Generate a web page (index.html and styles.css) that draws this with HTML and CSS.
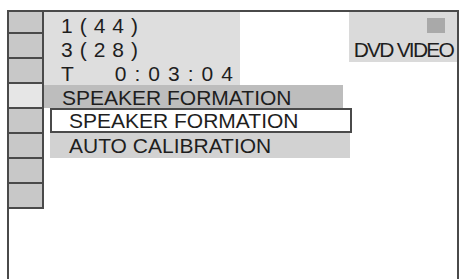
FILE: index.html
```html
<!DOCTYPE html>
<html>
<head>
<meta charset="utf-8">
<link rel="stylesheet" href="styles.css">
</head>
<body>
<div class="screen">
  <div class="tiles">
    <div class="tile first"></div>
    <div class="tile"></div>
    <div class="tile"></div>
    <div class="tile light"></div>
    <div class="tile"></div>
    <div class="tile"></div>
    <div class="tile"></div>
    <div class="tile"></div>
  </div>
  <div class="main">
    <div class="top">
      <div class="info">
        <div class="line">1(44)</div>
        <div class="line">3(28)</div>
        <div class="line time"><span class="time-label">T</span><span class="time-value">0:03:04</span></div>
      </div>
      <div class="disc">
        <span class="disc-icon"></span>
        <span class="disc-label">DVD VIDEO</span>
      </div>
    </div>
    <div class="menu-title">SPEAKER FORMATION</div>
    <div class="menu-item selected">SPEAKER FORMATION</div>
    <div class="menu-item">AUTO CALIBRATION</div>
  </div>
</div>
</body>
</html>
```

FILE: styles.css
```css
html, body {
  margin: 0;
  padding: 0;
  background: #ffffff;
}
body {
  font-family: "Liberation Sans", Arial, sans-serif;
  font-size: 21px;
  color: #1e1e1e;
}
.screen {
  box-sizing: border-box;
  margin: 10px 0 0 7px;
  width: 452px;
  height: 269px;
  border: 2px solid #4a4a4a;
  border-bottom: none;
  display: flex;
  align-items: flex-start;
}
.tiles {
  box-sizing: border-box;
  width: 35px;
  border-right: 2px solid #4a4a4a;
  display: flex;
  flex-direction: column;
}
.tile {
  height: 23px;
  background: #c8c8c8;
  border-bottom: 2px solid #4a4a4a;
}
.tile.first {
  height: 20px;
}
.tile.light {
  background: #e6e6e6;
}
.main {
  flex: 1;
  display: flex;
  flex-direction: column;
  align-items: flex-start;
}
.top {
  align-self: stretch;
  display: flex;
  justify-content: space-between;
  align-items: flex-start;
}
.info {
  box-sizing: border-box;
  width: 196px;
  height: 73px;
  background: #dedede;
  padding: 2px 0 0 17px;
}
.line {
  line-height: 24px;
  height: 24px;
  letter-spacing: 7px;
  white-space: nowrap;
}
.time {
  display: flex;
}
.time-label {
  letter-spacing: 0;
}
.time-value {
  margin-left: 41px;
  letter-spacing: 8px;
}
.disc {
  box-sizing: border-box;
  width: 108px;
  height: 50px;
  background: #dadada;
  display: flex;
  flex-direction: column;
  align-items: flex-end;
}
.disc-icon {
  width: 18px;
  height: 15px;
  margin: 6px 12px 0 0;
  background: #a9a9a9;
}
.disc-label {
  margin-top: 5px;
  padding-right: 4px;
  line-height: 24px;
  height: 24px;
  letter-spacing: -1.8px;
  white-space: nowrap;
}
.menu-title {
  box-sizing: border-box;
  width: 299px;
  height: 23px;
  line-height: 23px;
  padding: 1px 0 0 18px;
  background: #bdbdbd;
  white-space: nowrap;
}
.menu-item {
  box-sizing: border-box;
  margin-left: 6px;
  width: 300px;
  height: 25px;
  line-height: 25px;
  padding-left: 19px;
  background: #d2d2d2;
  white-space: nowrap;
}
.menu-item.selected {
  width: 302px;
  line-height: 21px;
  padding-left: 17px;
  background: #ffffff;
  border: 2px solid #4a4a4a;
}
```
